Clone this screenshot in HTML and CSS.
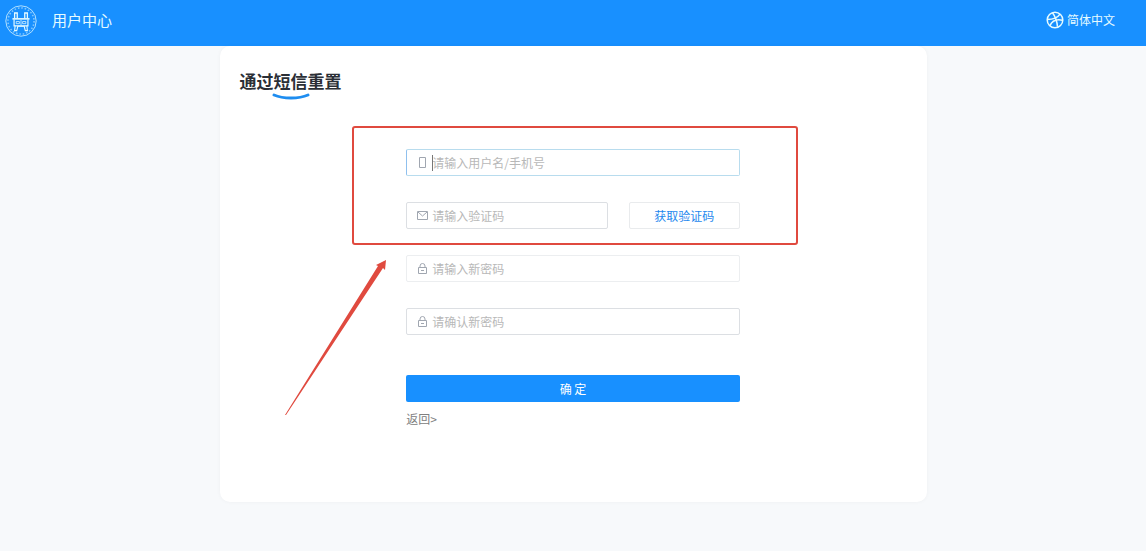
FILE: index.html
```html
<!DOCTYPE html>
<html lang="zh-CN">
<head>
    <meta charset="UTF-8">
    <meta name="viewport" content="width=device-width, initial-scale=1.0">
    <title>用户中心</title>
    <link rel="stylesheet" href="styles.css">
</head>
<body>
    <header class="header">
        <div class="brand">
            <svg class="logo" viewBox="0 0 60 60" fill="none" stroke="currentColor" aria-hidden="true">
                <circle cx="30" cy="30" r="28.5" stroke-width="1.4"/>
                <circle cx="30" cy="30" r="24.5" stroke-width="3" stroke-dasharray="3 3.400" opacity="0.5"/>
                <path d="M18 25V15h5v10M37 25V15h5v10" stroke-width="2.4"/>
                <path d="M14 26h32" stroke-width="3"/>
                <path d="M17 27v12h26V27" stroke-width="2.2"/>
                <path d="M21 31h6v4h-6zM33 31h6v4h-6zM30 28v10" stroke-width="1.4"/>
                <path d="M19 39l-1 9h4l2-8h12l2 8h4l-1-9" stroke-width="2"/>
            </svg>
            <span class="brand-name">用户中心</span>
        </div>
        <a class="language" href="#">
            <svg class="language-icon" viewBox="0 0 18 18" fill="none" stroke="currentColor" stroke-width="1.500" aria-hidden="true">
                <circle cx="9" cy="9" r="7.8"/>
                <path d="M6.500 1.800c3 4 4.500 8.500 5 14"/>
                <path d="M1.300 8.500c5.500 0 10.200-1.500 12.700-5.300"/>
                <path d="M4 14.800c2-4.800 6.500-7 12.700-5.500"/>
            </svg>
            <span>简体中文</span>
        </a>
    </header>

    <main class="card">
        <h1 class="title">
            通过短信重置
            <svg class="title-arc" viewBox="0 0 38 8" fill="none" aria-hidden="true">
                <path d="M2 3c9 4 25 4 34 0" stroke="#1e8df0" stroke-width="3" stroke-linecap="round"/>
            </svg>
        </h1>

        <form class="form">
            <div class="verify">
                <label class="field field-active">
                    <svg class="field-icon" viewBox="0 0 11 11" fill="none" stroke="currentColor" aria-hidden="true">
                        <path d="M2.500 .5h6v10h-6z"/>
                    </svg>
                    <span class="caret"></span>
                    <input type="text" placeholder="请输入用户名/手机号" aria-label="用户名/手机号">
                </label>
                <div class="code-row">
                    <label class="field code-field">
                        <svg class="field-icon" viewBox="0 0 11 11" fill="none" stroke="currentColor" aria-hidden="true">
                            <path d="M.5 1.500h10v8H.5zM1 2l4.500 4L10 2"/>
                        </svg>
                        <input type="text" placeholder="请输入验证码" aria-label="验证码">
                    </label>
                    <button type="button" class="code-btn">获取验证码</button>
                </div>
                <div class="highlight"></div>
                <svg class="arrow" viewBox="0 0 104 158" aria-hidden="true">
                    <path d="M1 156L94 7l-2-1L102 1l-1 10-2-2L2 156z" fill="#e04a3f"/>
                </svg>
            </div>
            <label class="field field-light">
                <svg class="field-icon" viewBox="0 0 11 11" fill="none" stroke="currentColor" aria-hidden="true">
                    <path d="M1.500 4.500h8v6h-8zM3 4.500V3a2.500 2.500 0 0 1 5 0v1.500M4 7.500h3"/>
                </svg>
                <input type="password" placeholder="请输入新密码" aria-label="新密码">
            </label>
            <label class="field">
                <svg class="field-icon" viewBox="0 0 11 11" fill="none" stroke="currentColor" aria-hidden="true">
                    <path d="M1.500 4.500h8v6h-8zM3 4.500V3a2.500 2.500 0 0 1 5 0v1.500M4 7.500h3"/>
                </svg>
                <input type="password" placeholder="请确认新密码" aria-label="确认新密码">
            </label>
            <button type="submit" class="submit-btn">确 定</button>
            <a class="back" href="#">返回&gt;</a>
        </form>
    </main>
</body>
</html>
```

FILE: styles.css
```css
* {
    box-sizing: border-box;
}

body {
    margin: 0;
    min-height: 100vh;
    background-color: #f7f9fb;
    font-family: "Noto Sans CJK SC", sans-serif;
    font-size: 12px;
    color: #333;
}

.header {
    display: flex;
    justify-content: space-between;
    align-items: center;
    height: 46px;
    padding: 0 31px 4px 5px;
    background-color: #1890ff;
    color: #e6fbff;
}

.brand {
    display: flex;
    align-items: center;
    gap: 15px;
}

.logo {
    width: 32px;
    height: 32px;
}

.brand-name {
    padding-bottom: 2px;
    font-size: 15px;
    line-height: 20px;
}

.language {
    display: flex;
    align-items: center;
    gap: 3px;
    padding-bottom: 2px;
    color: inherit;
    line-height: 18px;
    text-decoration: none;
}

.language-icon {
    width: 18px;
    height: 18px;
}

.card {
    width: 62%;
    max-width: 707px;
    margin: 0 auto 48px;
    padding: 23px 20px 74px;
    background-color: #fff;
    border-radius: 10px;
    box-shadow: 0 0 4px rgba(0, 0, 0, 0.04);
}

.title {
    position: relative;
    margin: 0;
    font-size: 17px;
    line-height: 24px;
    color: #2b2f36;
}

.title-arc {
    position: absolute;
    left: 32px;
    top: 23px;
    width: 38px;
    height: 8px;
}

.form {
    display: flex;
    flex-direction: column;
    gap: 26px;
    width: 50%;
    margin: 56px auto 0;
}

.verify {
    position: relative;
    display: flex;
    flex-direction: column;
    gap: 26px;
}

.field {
    display: flex;
    align-items: center;
    gap: 4px;
    height: 27px;
    padding: 0 10px;
    background-color: #fff;
    border: 1px solid #dcdfe3;
    border-radius: 2px;
    color: #a0a6b0;
}

.field-active {
    position: relative;
    border-color: #b8dcee;
    border-left-color: #8fc0ee;
}

.field-light {
    border-color: #eceef0;
}

.field-icon {
    flex: none;
    width: 11px;
    height: 11px;
}

.field input {
    flex: 1;
    min-width: 0;
    padding: 0;
    border: none;
    outline: none;
    background: none;
    font-family: inherit;
    font-size: 12px;
    color: #333;
}

.field input::placeholder {
    color: #b8b8b8;
}

.caret {
    position: absolute;
    left: 25px;
    top: 5px;
    width: 1px;
    height: 16px;
    background-color: #777;
}

.code-row {
    display: flex;
    justify-content: space-between;
    gap: 21px;
}

.code-field {
    flex: 1;
}

.code-btn {
    width: 111px;
    padding: 0;
    background-color: #fff;
    border: 1px solid #e9ebed;
    border-radius: 2px;
    font-family: inherit;
    font-size: 12px;
    color: #1e88ee;
    cursor: pointer;
}

/* red callout around the verification fields */
.highlight {
    position: absolute;
    top: -23px;
    right: -58px;
    bottom: -16px;
    left: -54px;
    border: 2px solid #e04a3f;
    border-radius: 3px;
    pointer-events: none;
}

.arrow {
    position: absolute;
    left: -122px;
    top: 110px;
    width: 104px;
    height: 158px;
    pointer-events: none;
}

.submit-btn {
    height: 27px;
    margin-top: 14px;
    padding: 0;
    background-color: #1890ff;
    border: none;
    border-radius: 2px;
    font-family: inherit;
    font-size: 12px;
    color: #fff;
    cursor: pointer;
}

.back {
    align-self: flex-start;
    margin-top: -18px;
    line-height: 18px;
    color: #808080;
    text-decoration: none;
}
```
